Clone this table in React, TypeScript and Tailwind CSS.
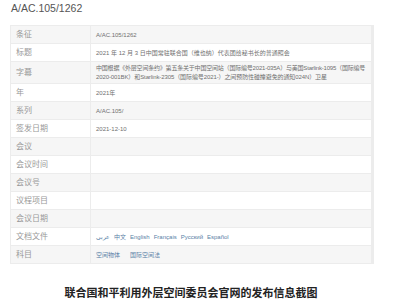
import React from "react";

const rows: { label: string; value?: React.ReactNode; tall?: boolean }[] = [
  { label: "条征", value: "A/AC.105/1262" },
  { label: "标题", value: "2021 年 12 月 3 日中国常驻联合国（维也纳）代表团给秘书长的普通照会" },
  {
    label: "字幕",
    tall: true,
    value: (
      <span className="flex flex-col">
        <span className="whitespace-nowrap tracking-[-0.2px]">中国根据《外层空间条约》第五条关于中国空间站（国际编号2021-035A）与美国Starlink-1095（国际编号</span>
        <span className="whitespace-nowrap tracking-[-0.1px]">2020-001BK）和Starlink-2305（国际编号2021-）之间预防性碰撞避免的通知024N）卫星</span>
      </span>
    ),
  },
  { label: "年", value: "2021年" },
  { label: "系列", value: "A/AC.105/" },
  { label: "签发日期", value: "2021-12-10" },
  { label: "会议" },
  { label: "会议时间" },
  { label: "会议号" },
  { label: "议程项目" },
  { label: "会议日期" },
  {
    label: "文档文件",
    value: (
      <span className="flex gap-[4px] text-[#5a7fa6]">
        <span>عربي</span>
        <span>中文</span>
        <span>English</span>
        <span>Français</span>
        <span>Русский</span>
        <span>Español</span>
      </span>
    ),
  },
  {
    label: "科目",
    value: (
      <span className="flex gap-[10px] text-[#5a7fa6]">
        <span>空间物体</span>
        <span>国际空间法</span>
      </span>
    ),
  },
];

export default function App() {
  return (
    <div
      className="w-[400px] h-[300px] bg-white overflow-hidden"
      style={{ fontFamily: '"Liberation Sans", "Noto Sans CJK SC", sans-serif' }}
    >
      <div className="pl-[11px] pt-[2px] h-[25px] text-[10.5px] leading-[12px] text-[#555]">A/AC.105/1262</div>
      <div className="ml-[10px] w-[364px] border-l border-r-[3px] border-[#ececec] border-t">
        {rows.map((r, i) => (
          <div
            key={i}
            className={`grid grid-cols-[80px_1fr] border-b border-[#ececec] ${
              i % 2 === 0 ? "bg-[#f6f6f6]" : "bg-white"
            } ${r.tall ? "h-[22px]" : "h-[18px]"}`}
          >
            <div className="flex items-center pl-[5px] border-r border-[#ececec] text-[8px] text-[#999]">
              {r.label}
            </div>
            <div
              className={`flex items-center pl-[5px] text-[6px] text-[#707070] overflow-hidden ${
                r.tall ? "leading-[9px]" : "leading-[8px]"
              }`}
            >
              {r.value}
            </div>
          </div>
        ))}
      </div>
      <div className="flex justify-center pr-[18px] mt-[22px] text-[11px] leading-[12px] font-semibold text-[#222]"
        style={{ fontFamily: '"Noto Sans CJK SC", sans-serif' }}>
        联合国和平利用外层空间委员会官网的发布信息截图
      </div>
    </div>
  );
}
